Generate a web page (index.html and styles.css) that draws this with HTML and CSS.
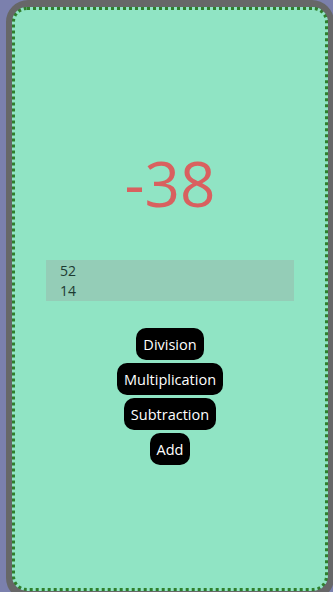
FILE: index.html
```
<!DOCTYPE html>
<html>
<head>
<meta charset="utf-8">
<link rel="stylesheet" href="styles.css">
</head>
<body>
<div class="frame">
  <div class="app">
    <div class="result">-38</div>
    <div class="inputs">
      <div class="val">52</div>
      <div class="val">14</div>
    </div>
    <div class="ops">
      <button class="op">Division</button>
      <button class="op">Multiplication</button>
      <button class="op">Subtraction</button>
      <button class="op">Add</button>
    </div>
  </div>
</div>
</body>
</html>
```
FILE: styles.css
```
html, body {
  margin: 0;
  padding: 0;
}
body {
  background: #7b80ad;
  height: 592px;
  overflow: hidden;
  font-family: "Open Sans", "Noto Sans", sans-serif;
}
.frame {
  margin-left: 6px;
  width: 328px;
  height: 600px;
  box-sizing: border-box;
  border: 7px solid #676768;
  border-left-width: 6px;
  border-right-width: 6px;
  border-radius: 22px;
  background: #676768;
}
.app {
  height: 584px;
  box-sizing: border-box;
  border: 3px dotted #2f7f2c;
  border-radius: 15px;
  background: #90e4c4;
  display: flex;
  flex-direction: column;
  align-items: center;
}
.result {
  margin-top: 133px;
  font-size: 62px;
  line-height: 80px;
  color: #d9605f;
  font-weight: 400;
}
.inputs {
  margin-top: 37px;
  width: 248px;
  height: 41px;
  box-sizing: border-box;
  background: #94cdb7;
  padding: 1px 0 0 14px;
  color: #1d3a31;
  font-size: 14px;
  line-height: 20px;
}
.ops {
  margin-top: 27px;
  display: flex;
  flex-direction: column;
  align-items: center;
  gap: 3px;
}
.op {
  background: #000;
  color: #fff;
  border: none;
  border-radius: 10px;
  height: 32px;
  padding: 0 7px;
  font-family: "Open Sans", "Noto Sans", sans-serif;
  font-size: 14.5px;
}
```
